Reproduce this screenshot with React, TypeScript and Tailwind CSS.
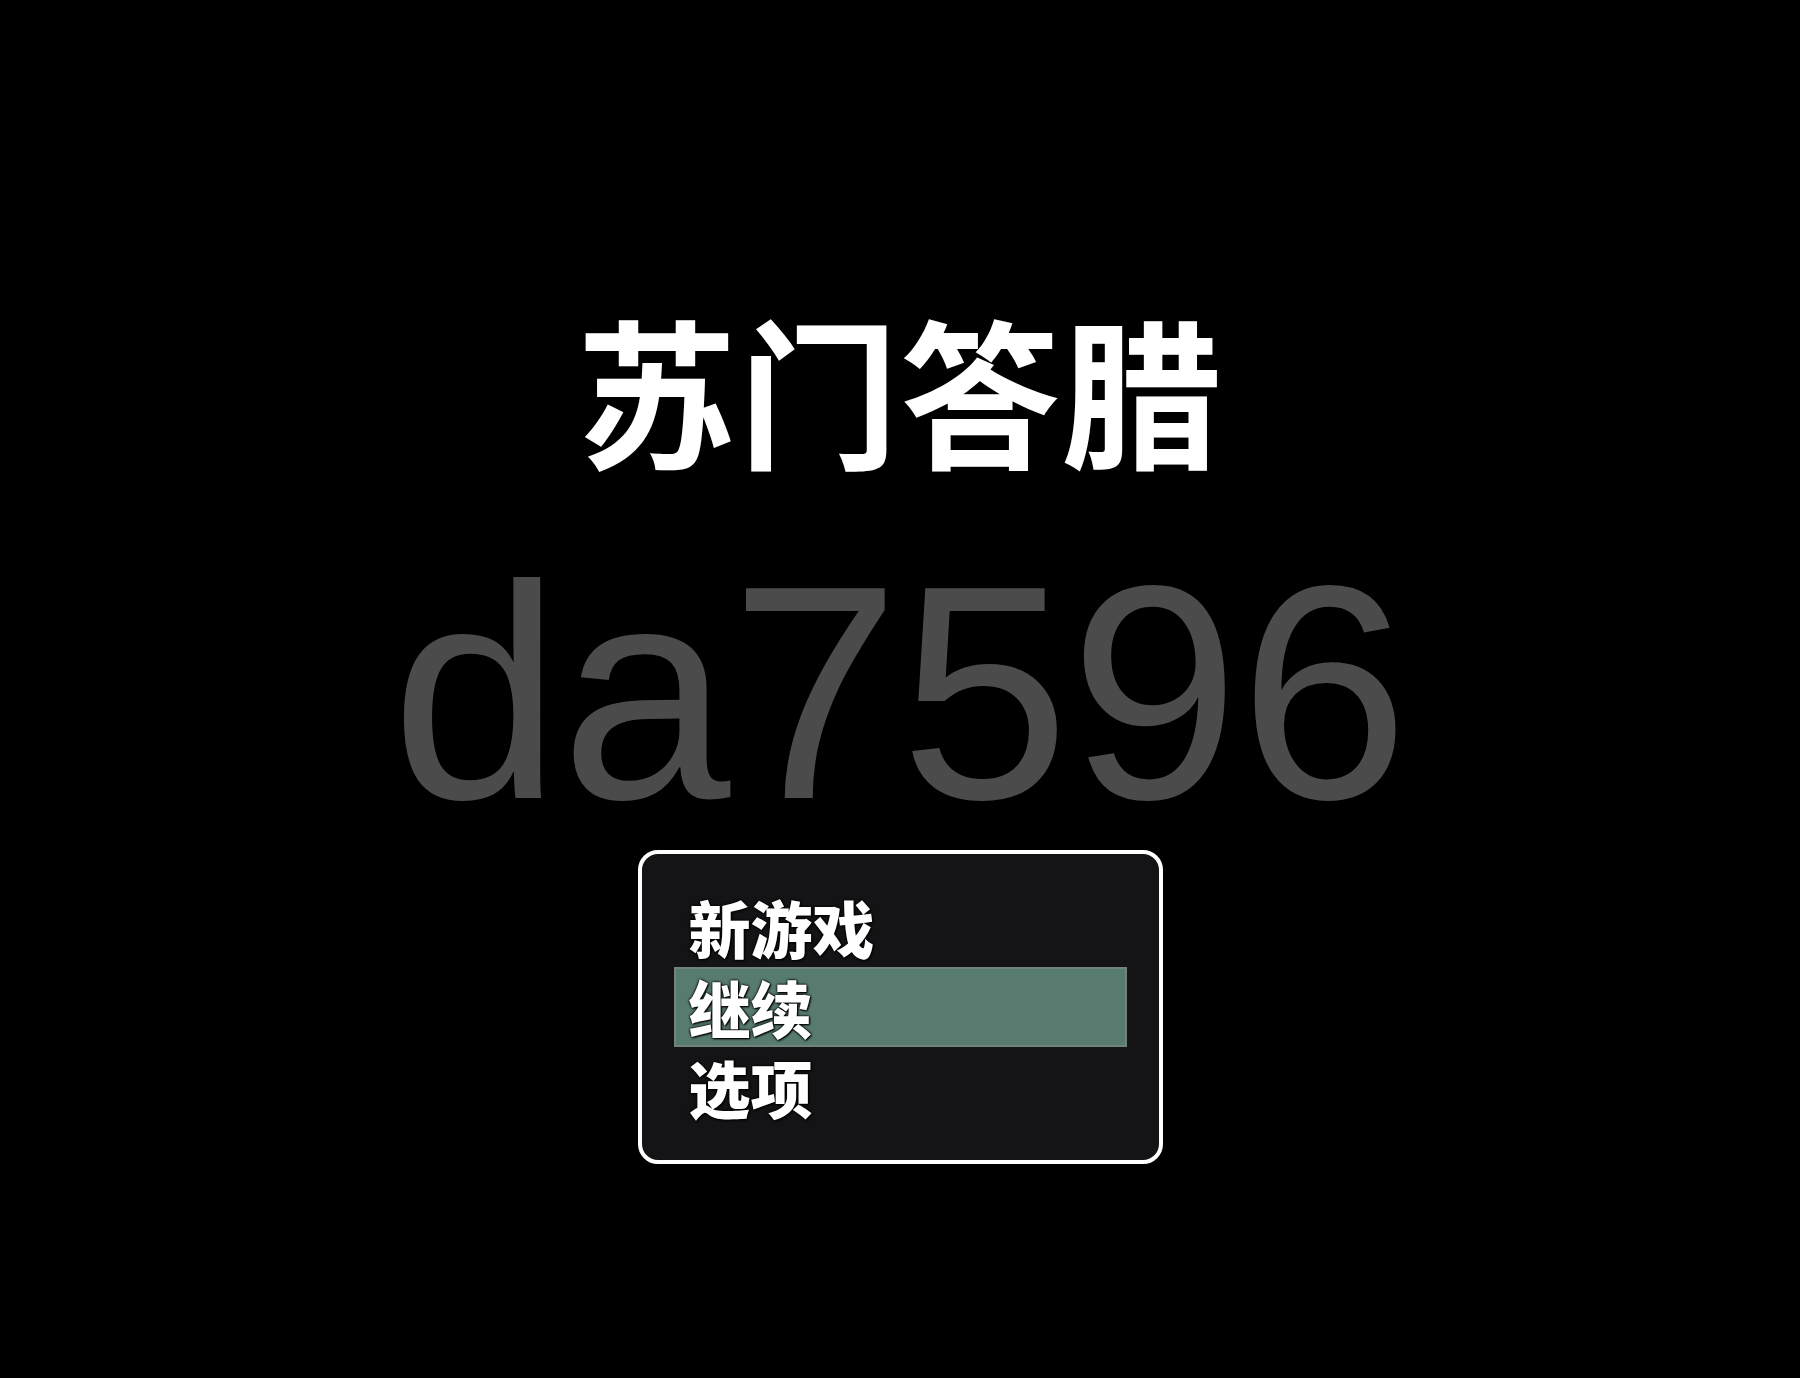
const menuItems = [
  { label: '新游戏', active: false },
  { label: '继续', active: true },
  { label: '选项', active: false },
];

export default function App() {
  return (
    <div className="min-h-screen w-full bg-black flex flex-col items-center pt-[307px]">
      <h1 className="text-[160px] leading-none font-bold text-white tracking-[0.01em] font-['Noto_Sans_CJK_SC','Noto_Sans',sans-serif]">
        苏门答腊
      </h1>

      <div className="mt-[73px] text-[305px] leading-none text-[#4b4b4b] font-['Liberation_Sans',Arial,sans-serif]">
        da7596
      </div>

      <div className="mt-[5px] w-[525px] border-4 border-white rounded-[20px] bg-[#141316] px-8 py-[33px]">
        {menuItems.map((item) => (
          <div
            key={item.label}
            className={`h-[80px] flex items-center pl-[13px] ${
              item.active ? 'bg-[#587b6f] border-2 border-[#72837d]' : 'border-2 border-transparent'
            }`}
          >
            <span className="text-[62px] leading-none font-black text-white [text-shadow:0_0_3px_#000,0_0_2px_#000,1px_1px_2px_#000] font-['Noto_Sans_CJK_SC',sans-serif]">
              {item.label}
            </span>
          </div>
        ))}
      </div>
    </div>
  );
}
